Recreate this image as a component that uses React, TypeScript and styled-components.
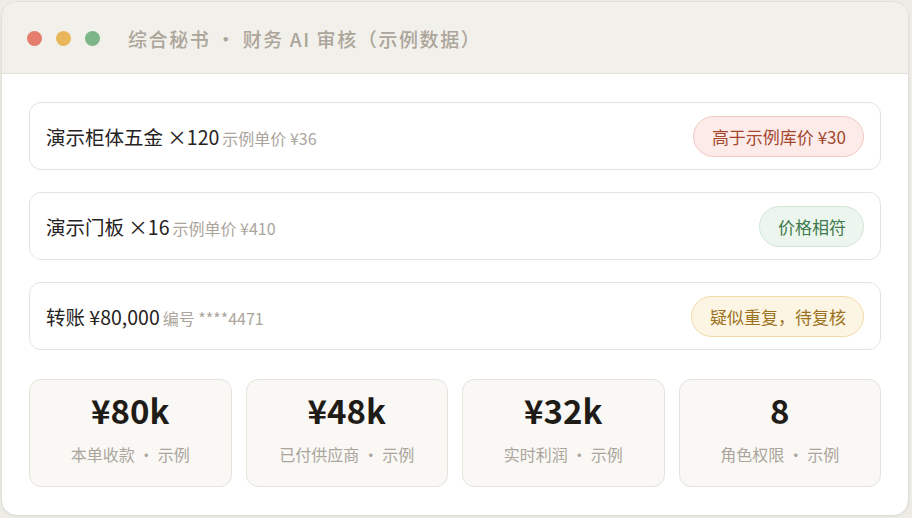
import styled, { createGlobalStyle } from 'styled-components';

type Tone = 'red' | 'green' | 'yellow';

const tones: Record<Tone, { bg: string; border: string; text: string }> = {
  red: { bg: '#fcebe8', border: '#f1c9c0', text: '#a3472f' },
  green: { bg: '#edf6ee', border: '#cfe5d4', text: '#3f7a4e' },
  yellow: { bg: '#fdf5e3', border: '#f0dba6', text: '#9c7222' },
};

const items: { name: string; note: string; badge: string; tone: Tone }[] = [
  { name: '演示柜体五金 ×120', note: '示例单价 ¥36', badge: '高于示例库价 ¥30', tone: 'red' },
  { name: '演示门板 ×16', note: '示例单价 ¥410', badge: '价格相符', tone: 'green' },
  { name: '转账 ¥80,000', note: '编号 ****4471', badge: '疑似重复，待复核', tone: 'yellow' },
];

const stats = [
  { value: '¥80k', label: '本单收款' },
  { value: '¥48k', label: '已付供应商' },
  { value: '¥32k', label: '实时利润' },
  { value: '8', label: '角色权限' },
];

function App() {
  return (
    <>
      <GlobalStyle />
      <Window>
        <TitleBar>
          <Dots>
            <Dot color='#e47d6b' />
            <Dot color='#e9b65b' />
            <Dot color='#7db488' />
          </Dots>
          <Title>综合秘书 · 财务 AI 审核（示例数据）</Title>
        </TitleBar>
        <Body>
          {items.map((item) => (
            <Row key={item.name}>
              <RowText>
                {item.name}
                <Note>{item.note}</Note>
              </RowText>
              <Badge tone={item.tone}>{item.badge}</Badge>
            </Row>
          ))}
          <Stats>
            {stats.map((s) => (
              <StatCard key={s.label}>
                <StatValue>{s.value}</StatValue>
                <StatLabel>{s.label} · 示例</StatLabel>
              </StatCard>
            ))}
          </Stats>
        </Body>
      </Window>
    </>
  );
}

const GlobalStyle = createGlobalStyle`
  html, body {
    margin: 0;
    background: #eeece7;
  }
  body {
    padding: 1px;
    font-family: "Noto Sans CJK SC", "Noto Sans", sans-serif;
  }
`;

const Window = styled.div`
  width: 908px;
  height: 515px;
  box-sizing: border-box;
  background: #fff;
  border: 1px solid #e2dfd8;
  border-radius: 16px;
  overflow: hidden;
  display: flex;
  flex-direction: column;
  box-shadow: 0 1px 3px rgba(0, 0, 0, 0.06);
`;

const TitleBar = styled.div`
  height: 72px;
  flex-shrink: 0;
  box-sizing: border-box;
  background: #f2f0eb;
  border-bottom: 1px solid #e3e0d9;
  display: flex;
  align-items: center;
  padding: 2px 0 0 25px;
`;

const Dots = styled.div`
  display: flex;
  gap: 14px;
  margin-right: 28px;
`;

const Dot = styled.span<{ color: string }>`
  width: 15px;
  height: 15px;
  border-radius: 50%;
  background: ${(p) => p.color};
`;

const Title = styled.div`
  font-size: 19px;
  letter-spacing: 1.6px;
  color: #aca59a;
  font-weight: 500;
`;

const Body = styled.div`
  padding: 28px 27px;
  display: flex;
  flex-direction: column;
  gap: 22px;
`;

const Row = styled.div`
  height: 68px;
  box-sizing: border-box;
  border: 1px solid #e6e3dc;
  border-radius: 12px;
  display: flex;
  align-items: center;
  justify-content: space-between;
  padding: 0 16px;
`;

const RowText = styled.div`
  font-size: 19.5px;
  color: #26221d;
  display: flex;
  align-items: baseline;
  gap: 3px;
`;

const Note = styled.span`
  font-size: 16px;
  color: #aba59c;
`;

const Badge = styled.span<{ tone: Tone }>`
  font-size: 17px;
  padding: 7px 17px 7px 18px;
  border-radius: 999px;
  background: ${(p) => tones[p.tone].bg};
  border: 1px solid ${(p) => tones[p.tone].border};
  color: ${(p) => tones[p.tone].text};
`;

const Stats = styled.div`
  display: grid;
  grid-template-columns: repeat(4, 1fr);
  gap: 14px;
  margin-top: 7px;
`;

const StatCard = styled.div`
  height: 108px;
  box-sizing: border-box;
  background: #f9f8f5;
  border: 1px solid #e6e3dc;
  border-radius: 12px;
  display: flex;
  flex-direction: column;
  align-items: center;
  padding-top: 8px;
`;

const StatValue = styled.div`
  font-size: 33px;
  font-weight: 700;
  color: #1f1b17;
  line-height: 44px;
`;

const StatLabel = styled.div`
  font-size: 16px;
  color: #aba59c;
  margin-top: 10px;
`;

export default App;
